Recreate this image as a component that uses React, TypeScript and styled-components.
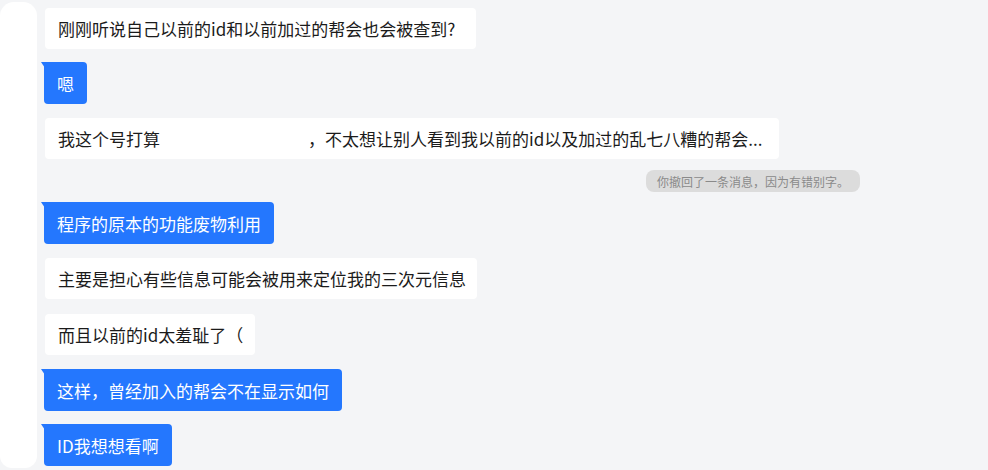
import React from "react";
import styled, { createGlobalStyle } from "styled-components";

const Global = createGlobalStyle`
  html, body { margin: 0; padding: 0; background: #f4f5f7; }
  body { font-family: "Noto Sans CJK SC", "Noto Sans", sans-serif; }
`;

const Page = styled.div`
  display: flex;
  width: 988px;
  height: 470px;
  overflow: hidden;
  background: #f4f5f7;
`;

const SideStrip = styled.div`
  width: 37px;
  flex: none;
  margin-top: 2px;
  height: 466px;
  background: #ffffff;
  border-radius: 14px 14px 12px 12px;
`;

const Feed = styled.div`
  display: flex;
  flex-direction: column;
  align-items: flex-start;
  padding: 8px 0 0 8px;
`;

type BubbleProps = { $mine?: boolean; $gap?: number; $tail?: number };

const Bubble = styled.div<BubbleProps>`
  position: relative;
  box-sizing: border-box;
  margin-top: ${(p) => p.$gap ?? 0}px;
  margin-left: ${(p) => (p.$mine ? -1 : 0)}px;
  height: ${(p) => (p.$mine ? 42 : 41)}px;
  padding: 0 ${(p) => (p.$tail ?? (p.$mine ? 13 : 11))}px 0 13px;
  display: flex;
  align-items: center;
  white-space: nowrap;
  font-size: 17px;
  line-height: 21px;
  border-radius: 4px;
  background: ${(p) => (p.$mine ? "#2477fe" : "#ffffff")};
  color: ${(p) => (p.$mine ? "#ffffff" : "#1b1b1b")};
  ${(p) =>
    p.$mine &&
    `
    border-top-left-radius: 0;
    &::before {
      content: "";
      position: absolute;
      left: -3px;
      top: 0;
      width: 4px;
      height: 6px;
      background: #2477fe;
      clip-path: polygon(0 0, 100% 0, 100% 100%);
    }
  `}
`;

const Redacted = styled.span`
  display: inline-block;
  width: 148px;
`;

const NoticeRow = styled.div`
  margin-top: 11px;
  margin-left: 601px;
`;

const Notice = styled.div`
  box-sizing: border-box;
  height: 22px;
  padding: 0 11px;
  display: flex;
  align-items: center;
  border-radius: 8px;
  background: #dcdcdc;
  color: #8a8a8a;
  font-size: 12px;
  white-space: nowrap;
`;

export default function App() {
  return (
    <>
      <Global />
      <Page>
        <SideStrip />
        <Feed>
          <Bubble $tail={21}>刚刚听说自己以前的id和以前加过的帮会也会被查到?</Bubble>
          <Bubble $mine $gap={13}>嗯</Bubble>
          <Bubble $gap={14} $tail={17}>
            我这个号打算<Redacted />，不太想让别人看到我以前的id以及加过的乱七八糟的帮会...
          </Bubble>
          <NoticeRow>
            <Notice>你撤回了一条消息，因为有错别字。</Notice>
          </NoticeRow>
          <Bubble $mine $gap={10}>程序的原本的功能废物利用</Bubble>
          <Bubble $gap={14}>主要是担心有些信息可能会被用来定位我的三次元信息</Bubble>
          <Bubble $gap={15} $tail={12}>而且以前的id太羞耻了（</Bubble>
          <Bubble $mine $gap={14}>这样，曾经加入的帮会不在显示如何</Bubble>
          <Bubble $mine $gap={13}>ID我想想看啊</Bubble>
        </Feed>
      </Page>
    </>
  );
}
